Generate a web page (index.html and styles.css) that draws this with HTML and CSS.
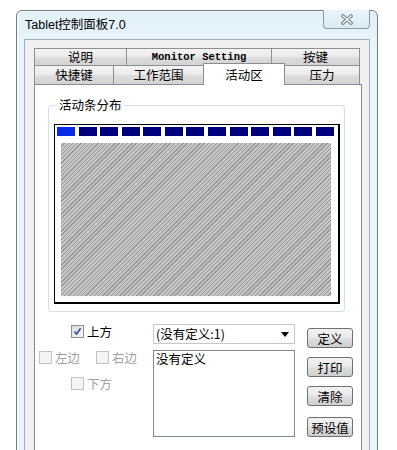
FILE: index.html
```html
<!DOCTYPE html>
<html lang="zh">
<head>
  <meta charset="UTF-8">
  <title>Tablet控制面板7.0</title>
  <link rel="stylesheet" href="styles.css">
</head>
<body>
  <!-- 窗口 -->
  <div class="window">
    <div class="titlebar">
      <span class="title">Tablet控制面板7.0</span>
      <button class="close-btn">
        <svg width="12" height="11" viewBox="0 0 12 11">
          <g stroke="#76828c" stroke-width="3.4" stroke-linecap="square">
            <line x1="2" y1="2" x2="10" y2="9"/>
            <line x1="10" y1="2" x2="2" y2="9"/>
          </g>
          <g stroke="#fff" stroke-width="1.3" stroke-linecap="square">
            <line x1="2" y1="2" x2="10" y2="9"/>
            <line x1="10" y1="2" x2="2" y2="9"/>
          </g>
        </svg>
      </button>
    </div>

    <div class="client">
      <!-- 标签页 -->
      <div class="tab-row row-back">
        <div class="tab" style="width:93px">说明</div>
        <div class="tab mono" style="width:146px">Monitor Setting</div>
        <div class="tab" style="width:89px">按键</div>
      </div>
      <div class="tab-row row-front">
        <div class="tab" style="width:80px">快捷键</div>
        <div class="tab" style="width:91px">工作范围</div>
        <div class="tab active" style="width:82px">活动区</div>
        <div class="tab" style="width:76px">压力</div>
      </div>

      <div class="panel">
        <fieldset class="group">
          <legend>活动条分布</legend>
          <div class="screen">
            <div class="bars">
              <span class="bar current"></span>
              <span class="bar"></span>
              <span class="bar"></span>
              <span class="bar"></span>
              <span class="bar"></span>
              <span class="bar"></span>
              <span class="bar"></span>
              <span class="bar"></span>
              <span class="bar"></span>
              <span class="bar"></span>
              <span class="bar"></span>
              <span class="bar"></span>
              <span class="bar"></span>
            </div>
            <div class="hatch"></div>
          </div>
        </fieldset>

        <div class="controls">
          <div class="sides">
            <div class="side-row indent">
              <label class="check"><span class="box checked">
                <svg width="9" height="9" viewBox="0 0 9 9"><polyline points="1.5,4.5 3.6,7 7.6,1.2" fill="none" stroke="#3c5aa0" stroke-width="1.8"/></svg>
              </span>上方</label>
            </div>
            <div class="side-row">
              <label class="check disabled"><span class="box"></span>左边</label>
              <label class="check disabled"><span class="box"></span>右边</label>
            </div>
            <div class="side-row indent">
              <label class="check disabled"><span class="box"></span>下方</label>
            </div>
          </div>

          <div class="mid">
            <div class="select">(没有定义:1)<span class="arrow"></span></div>
            <div class="listbox">没有定义</div>
          </div>

          <div class="buttons">
            <button class="btn">定义</button>
            <button class="btn">打印</button>
            <button class="btn">清除</button>
            <button class="btn">预设值</button>
          </div>
        </div>
      </div>
    </div>
  </div>
</body>
</html>
```

FILE: styles.css
```css
/* 整体 */
body {
  margin: 0;
  width: 397px;
  height: 450px;
  overflow: hidden;
  background: #fff;
  font-family: "Liberation Sans", "Noto Sans CJK SC", sans-serif;
  font-size: 12px;
  color: #000;
}

/* 窗口外框 */
.window {
  box-sizing: border-box;
  margin: 10px 0 0 16px;
  width: 362px;
  height: 460px;
  padding: 0 7px;
  border: 1px solid #6f7d88;
  border-radius: 6px 6px 0 0;
  background: linear-gradient(#e1f0f8, #e9f5fa 40px);
  box-shadow: inset 1px 1px 0 #fbfeff;
}
.titlebar {
  height: 28px;
  display: flex;
  justify-content: space-between;
  align-items: flex-start;
}
.title {
  margin-top: 7px;
  padding-left: 1px;
  font-size: 12.5px;
  line-height: 15px;
}
.close-btn {
  width: 47px;
  height: 19px;
  margin: -1px 0 0 0;
  padding: 0;
  border: 1px solid #8b9aa5;
  border-top: none;
  border-radius: 0 0 4px 4px;
  background: linear-gradient(#e9f5fa, #d9ebf3);
  display: flex;
  align-items: center;
  justify-content: center;
}

/* 客户区 */
.client {
  box-sizing: border-box;
  height: 430px;
  padding: 8px 7px 0 9px;
  border: 1px solid #a5b1ba;
  background: #f0f0f0;
}

/* 标签页 */
.tab-row {
  display: flex;
}
.tab {
  box-sizing: border-box;
  margin-right: -1px;
  border: 1px solid #8e8f8f;
  border-bottom: none;
  background: linear-gradient(#f3f3f3, #ececec 45%, #dcdcdc 55%, #d3d3d3);
  text-align: center;
  font-family: "Noto Sans CJK SC", sans-serif;
  font-size: 12.5px;
}
.row-back .tab {
  height: 17px;
  line-height: 16px;
}
.row-front .tab {
  height: 19px;
  line-height: 18px;
}
.tab.mono {
  font-family: "Liberation Mono", monospace;
  font-weight: bold;
  font-size: 10.5px;
}
.tab.active {
  position: relative;
  z-index: 1;
  height: 22px;
  margin-top: -2px;
  margin-bottom: -1px;
  line-height: 21px;
  background: #fff;
}

/* 内容面板 */
.panel {
  box-sizing: border-box;
  height: 380px;
  border: 1px solid #898c95;
  background: #fff;
  padding: 0 0 0 13px;
}
.group {
  box-sizing: border-box;
  width: 297px;
  margin: 13px 0 0 0;
  padding: 12px 4px 7px 5px;
  border: 1px solid #d5dfe5;
  border-radius: 3px;
}
.group legend {
  margin-left: 3px;
  padding: 0 2px;
  font-family: "Noto Sans CJK SC", sans-serif;
  font-size: 12.5px;
  line-height: 14px;
}
.screen {
  box-sizing: border-box;
  width: 286px;
  height: 180px;
  border: 1px solid #000;
  border-width: 1px 2px 2px 1px;
  padding: 2px 0 0 2px;
}
.bars {
  width: 277px;
  display: flex;
  justify-content: space-between;
}
.bar {
  width: 18px;
  height: 9px;
  background: #00007e;
}
.bar.current {
  background: #0a2be6;
}
.hatch {
  width: 270px;
  height: 153px;
  margin: 7px 0 0 4px;
  background: repeating-linear-gradient(135deg, #c5c5c5 0 2px, #969696 2px 3px);
}

/* 下部控件 */
.controls {
  display: flex;
  margin-top: 6px;
}
.sides {
  width: 114px;
  margin-left: -9px;
}
.side-row {
  height: 26px;
  display: flex;
  align-items: center;
  gap: 3px;
}
.side-row.indent {
  padding-left: 32px;
}
.check {
  display: flex;
  align-items: center;
  gap: 3px;
  font-family: "Noto Sans CJK SC", sans-serif;
  font-size: 12.5px;
  width: 54px;
}
.check.disabled {
  color: #a0a0a0;
}
.box {
  box-sizing: border-box;
  width: 13px;
  height: 13px;
  border: 1px solid #8f8f8f;
  background: linear-gradient(135deg, #dcdcdc, #f8f8f8);
  display: flex;
  align-items: center;
  justify-content: center;
}
.disabled .box {
  border-color: #c2c2c2;
  background: #f4f4f4;
}
.mid {
  width: 142px;
  padding-top: 6px;
}
.select {
  position: relative;
  box-sizing: border-box;
  height: 20px;
  padding-left: 2px;
  border: 1px solid #c5c9cd;
  font-family: "Noto Sans CJK SC", sans-serif;
  font-size: 12.5px;
  line-height: 18px;
}
.arrow {
  position: absolute;
  right: 5px;
  top: 7px;
  border-left: 4px solid transparent;
  border-right: 4px solid transparent;
  border-top: 5px solid #000;
}
.listbox {
  box-sizing: border-box;
  height: 87px;
  margin-top: 6px;
  padding-left: 2px;
  border: 1px solid #828790;
  font-family: "Noto Sans CJK SC", sans-serif;
  font-size: 12.5px;
  line-height: 16px;
}
.buttons {
  margin-left: 12px;
  padding-top: 10px;
  display: flex;
  flex-direction: column;
  gap: 9px;
}
.btn {
  box-sizing: border-box;
  width: 46px;
  height: 20px;
  padding: 0;
  border: 1px solid #707070;
  border-radius: 3px;
  background: linear-gradient(#f2f2f2, #ebebeb 45%, #dddddd 55%, #cfcfcf);
  font-family: "Noto Sans CJK SC", sans-serif;
  font-size: 12.5px;
  line-height: 17px;
  color: #000;
}
.btn:last-child {
  margin-top: 2px;
}
```
